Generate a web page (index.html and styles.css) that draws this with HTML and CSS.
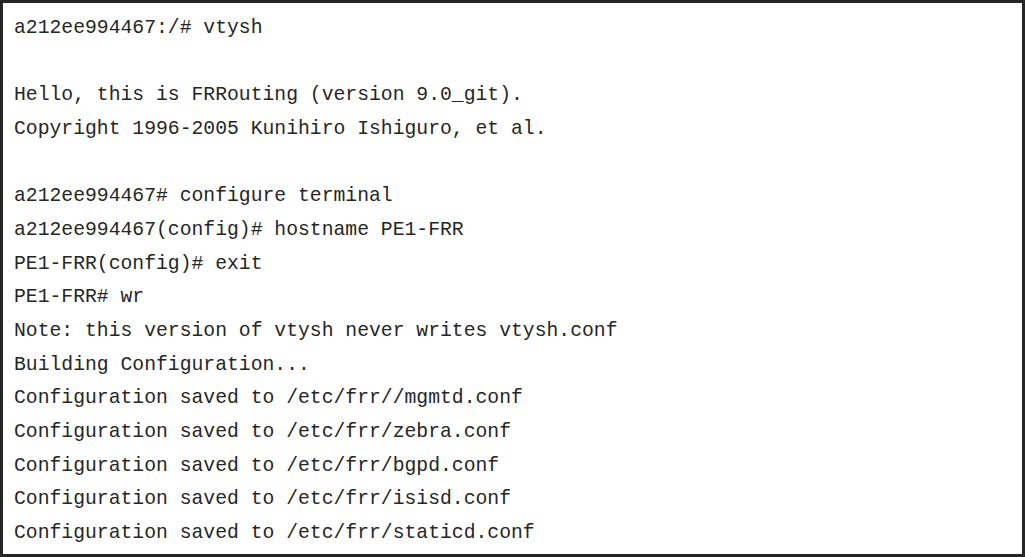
FILE: index.html
```html
<!DOCTYPE html>
<html>
<head>
<meta charset="utf-8">
<link rel="stylesheet" href="styles.css">
</head>
<body>
<div class="terminal">
<pre class="output">a212ee994467:/# vtysh

Hello, this is FRRouting (version 9.0_git).
Copyright 1996-2005 Kunihiro Ishiguro, et al.

a212ee994467# configure terminal
a212ee994467(config)# hostname PE1-FRR
PE1-FRR(config)# exit
PE1-FRR# wr
Note: this version of vtysh never writes vtysh.conf
Building Configuration...
Configuration saved to /etc/frr//mgmtd.conf
Configuration saved to /etc/frr/zebra.conf
Configuration saved to /etc/frr/bgpd.conf
Configuration saved to /etc/frr/isisd.conf
Configuration saved to /etc/frr/staticd.conf</pre>
</div>
</body>
</html>
```
FILE: styles.css
```css
html, body {
  margin: 0;
  padding: 0;
  background: #ffffff;
}
.terminal {
  box-sizing: border-box;
  width: 1025px;
  height: 557px;
  border: 3px solid #262626;
  padding: 9px 0 0 11px;
  background: #ffffff;
  overflow: hidden;
}
.output {
  margin: 0;
  font-family: "Liberation Mono", "Courier New", monospace;
  font-size: 19.73px;
  line-height: 33.67px;
  color: #262626;
}
```
